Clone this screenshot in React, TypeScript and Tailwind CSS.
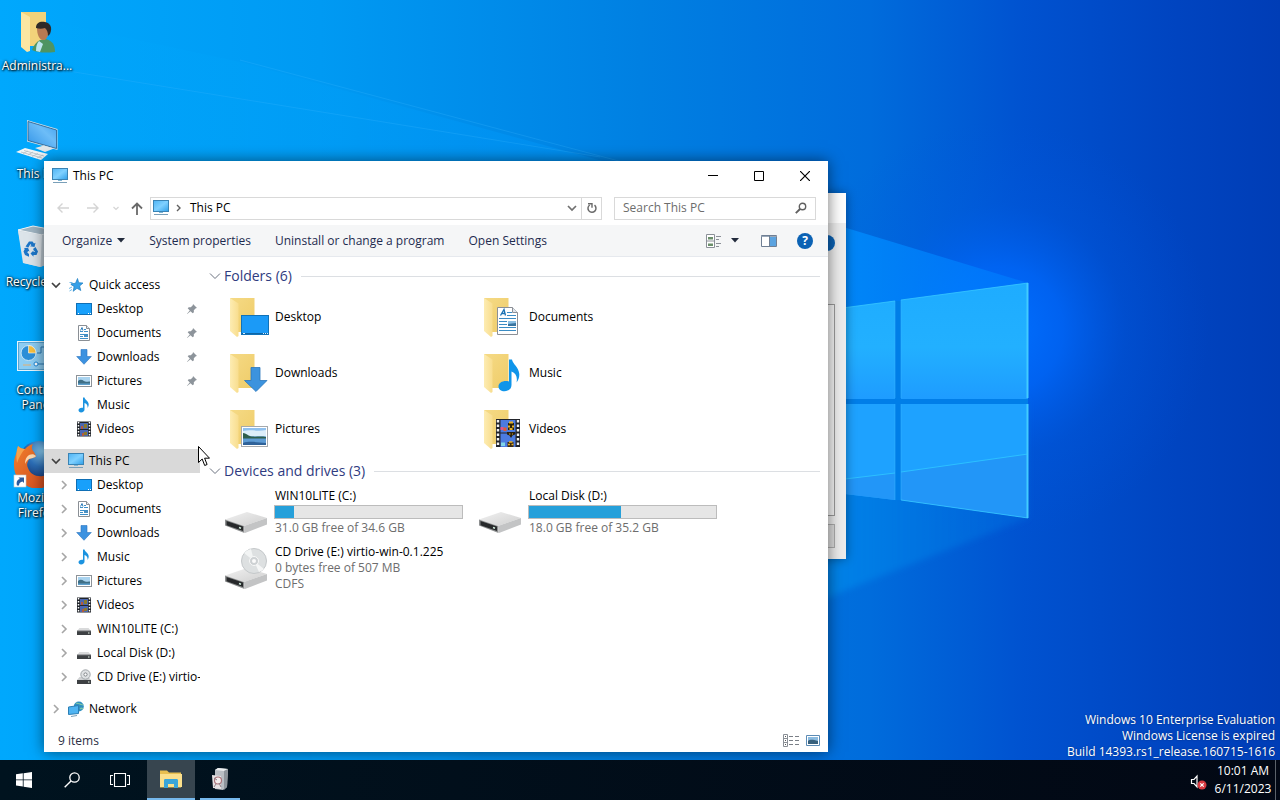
import { type ReactNode } from "react";

/* ---------- small icons ---------- */

function PcIcon() {
  return (
    <svg width="16" height="16" viewBox="0 0 16 16" aria-hidden="true">
      <defs>
        <linearGradient id="pcs" x1="0" y1="0" x2="1" y2="1">
          <stop offset="0" stopColor="#4fb3f3" />
          <stop offset=".5" stopColor="#7fd0ff" />
          <stop offset="1" stopColor="#2f9fe8" />
        </linearGradient>
      </defs>
      <rect x="0.5" y="0.5" width="15" height="11" fill="url(#pcs)" stroke="#3a83b4" />
      <path d="M6 12h4v1H6z" fill="#7fb6d6" />
      <path d="M1 14.5h14" stroke="#7a9fb8" />
    </svg>
  );
}

function DesktopIcon() {
  return (
    <svg width="16" height="16" viewBox="0 0 16 16" aria-hidden="true">
      <rect x="0.5" y="2.5" width="15" height="11" fill="#18a0fb" stroke="#0f6fb5" />
      <path d="M2 12.5h1M12 12.5h1M14 12.5h1" stroke="#fff" />
    </svg>
  );
}

function DocIcon() {
  return (
    <svg width="16" height="16" viewBox="0 0 16 16" aria-hidden="true">
      <path d="M2.5 .5h8l3 3v12h-11z" fill="#fff" stroke="#8a8f95" />
      <path d="M10.500 .5v3h3" fill="#e4e8ec" stroke="#8a8f95" />
      <path d="M4 6.500h3M8 6.500h4M4 9.500h8M4 13.500h8M8 4.500h2M4 11.500h3" stroke="#3d8fc8" />
      <path d="M4.500 5.500l1.500-3 1 3" fill="none" stroke="#2a7ab8" />
      <path d="M8 10h4v2H8z" fill="#4a90c2" />
    </svg>
  );
}

function DownIcon() {
  return (
    <svg width="16" height="16" viewBox="0 0 16 16" aria-hidden="true">
      <path d="M5 .5h6v7h4.300L8 15.300.7 7.500H5z" fill="#3c92e0" stroke="#2a74c0" strokeWidth=".6" />
    </svg>
  );
}

function PictureIcon() {
  return (
    <svg width="16" height="16" viewBox="0 0 16 16" aria-hidden="true">
      <rect x=".5" y="2.500" width="15" height="11" fill="#fff" stroke="#8c9298" />
      <path d="M2 4h12v8H2z" fill="#a9d3ef" />
      <path d="M2 8c2-2 4-1.500 6 0s4 0 6 .5V12H2z" fill="#3f6f86" />
      <path d="M2 10.500h12V12H2z" fill="#5ea0cd" />
    </svg>
  );
}

function MusicIcon() {
  return (
    <svg width="16" height="16" viewBox="0 0 16 16" aria-hidden="true">
      <path
        d="M7 .5h1.500c.3 2 2.200 2.800 3.400 4.500 1.300 1.800 1 4.200-.4 6 .3-2.200-.3-4.200-3-4.900v6.400c0 1.700-1.500 2.900-3.400 2.900-1.600 0-2.600-.9-2.600-2.100 0-1.700 2-3 4.500-2.500z"
        fill="#1b93e0"
      />
    </svg>
  );
}

function VideoIcon() {
  return (
    <svg width="16" height="16" viewBox="0 0 16 16" aria-hidden="true">
      <path d="M1 .5h14v15H1z" fill="#20242a" />
      <path d="M4 2h8v6H4zM4 9h8v6H4z" fill="#4a67b0" />
      <path d="M2.500 1v14.500M13.500 1v14.500" stroke="#fff" strokeWidth="1.500" strokeDasharray="1.500 1.500" />
      <path d="M5 5h2v3H5zM6 12h2v3H6z" fill="#b05a40" />
      <path d="M8 3h3v4H8zM8 11h3v3H8z" fill="#8a7a2c" />
    </svg>
  );
}

function DriveIcon() {
  return (
    <svg width="16" height="16" viewBox="0 0 16 16" aria-hidden="true">
      <path d="M3.500 7h9L15 10H1z" fill="#d9dadb" />
      <path d="M1 10h14v4H1z" fill="#3d4043" />
      <path d="M1 10h14" stroke="#6c6f72" />
      <path d="M12 12h1.500" stroke="#e8f4e8" />
    </svg>
  );
}

function CdSmallIcon() {
  return (
    <svg width="16" height="16" viewBox="0 0 16 16" aria-hidden="true">
      <path d="M3.500 8h9L15 11H1z" fill="#cfd1d3" />
      <circle cx="9.500" cy="5.500" r="4.700" fill="#dfe2e4" stroke="#8e9498" strokeWidth=".8" />
      <circle cx="9.500" cy="5.500" r="1.600" fill="#fff" stroke="#777c80" strokeWidth=".9" />
      <path d="M1 11h14v4H1z" fill="#3d4043" />
      <path d="M12 13h1.500" stroke="#e8f4e8" />
    </svg>
  );
}

function StarIcon() {
  return (
    <svg width="16" height="16" viewBox="0 0 16 16" aria-hidden="true">
      <path
        d="M9.500 1.500l1.200 4.200 4.300.3-3.400 3 1.200 4.500-3.800-2.200-3.800 3 .9-4.800-3.100-2 .2-.8 4.300-.4z"
        fill="#35a0e8"
        stroke="#1b7cc0"
        strokeWidth=".7"
      />
      <path d="M1.500 5.500h3M1 11.500l3-1.500M1.500 14l2.500-1.500" stroke="#5fb2e6" strokeWidth=".9" />
    </svg>
  );
}

function NetworkIcon() {
  return (
    <svg width="16" height="16" viewBox="0 0 16 16" aria-hidden="true">
      <circle cx="10.800" cy="5.500" r="5" fill="#2f8fc0" />
      <path d="M8 2c2 1 3 0 4 1s2 0 3 1M12 8c1-1 2-1 3 0" stroke="#7cc4a8" strokeWidth="1.200" fill="none" />
      <path d="M.5 6l10-1.500v8l-10 1z" fill="#4fb4f2" stroke="#2c7fb5" />
      <path d="M3 15.500l6-1" stroke="#7a9fb8" />
    </svg>
  );
}

function PinIcon() {
  return (
    <svg width="12" height="12" viewBox="0 0 12 12" aria-hidden="true">
      <path d="M7 1l4 4-1.200.2-2 2 .1 2L6.700 10.300 4.500 8.200 1.200 11l-.2-.2L3.800 7.500 1.700 5.300l1.100-1.100 2 .1 2-2z" fill="#8d949b" />
    </svg>
  );
}

function Chevron({ open, thin }: { open: boolean; thin?: boolean }) {
  if (thin) {
    return (
      <svg width="12" height="8" viewBox="0 0 12 8" aria-hidden="true">
        <path d="M1 1.500l5 5 5-5" fill="none" stroke="#6b7280" />
      </svg>
    );
  }
  return open ? (
    <svg width="10" height="10" viewBox="0 0 10 10" aria-hidden="true">
      <path d="M1 3l4 4 4-4" fill="none" stroke="#404040" strokeWidth="1.700" />
    </svg>
  ) : (
    <svg width="10" height="10" viewBox="0 0 10 10" aria-hidden="true">
      <path d="M3 1l4 4-4 4" fill="none" stroke="#a6a6a6" strokeWidth="1.600" />
    </svg>
  );
}

/* ---------- large icons ---------- */

function FolderIcon({ id, children }: { id: string; children: ReactNode }) {
  return (
    <svg width="48" height="48" viewBox="0 0 48 48" aria-hidden="true">
      <defs>
        <linearGradient id={"back" + id} x1="0" y1="0" x2="1" y2="1">
          <stop offset="0" stopColor="#f5da86" />
          <stop offset="1" stopColor="#efcc68" />
        </linearGradient>
        <linearGradient id={"front" + id} x1="0" y1="0" x2="1" y2="0">
          <stop offset="0" stopColor="#fdecb2" />
          <stop offset="1" stopColor="#f8dd8e" />
        </linearGradient>
      </defs>
      <path d="M8 5h24.500v34H14z" fill={"url(#back" + id + ")"} />
      <path d="M8 5l8.500 5.500V43l-1.500 1-7-6z" fill={"url(#front" + id + ")"} />
      {children}
    </svg>
  );
}

const folderArt: Record<string, ReactNode> = {
  Desktop: (
    <>
      <rect x="19.500" y="22.500" width="27" height="19" fill="#1b9af7" stroke="#1172b8" />
      <path d="M20 40.500h26" stroke="#0e65a5" />
      <path d="M21 40.500h2M41 40.500h1M43 40.500h1M45 40.500h1" stroke="#d9efff" />
    </>
  ),
  Documents: (
    <>
      <path d="M21.500 14.500h15l5 5v22h-20z" fill="#fff" stroke="#8b8f96" />
      <path d="M36.500 14.500v5h5" fill="#dfe5ec" stroke="#8b8f96" />
      <path d="M24.500 22.500l3.500-6 1.500 6M25.500 20.500h4" fill="none" stroke="#1c73b4" strokeWidth="1.300" />
      <path d="M31 19.500h5M31 22.500h9M23 25.500h17M23 28.500h8M23 31.500h8M23 34.500h17M23 37.500h17" stroke="#3b8cc4" />
      <path d="M32 28h8v5h-8z" fill="#39749f" />
      <path d="M32 28h8v2l-8 1z" fill="#8cbfe2" />
    </>
  ),
  Downloads: (
    <path d="M29 18.500h9v13h7L34 42.500 22.500 31.500H29z" fill="#3c93de" stroke="#2a76bb" strokeWidth=".8" />
  ),
  Music: (
    <path
      d="M33 10.500h3c.4 4 7 8 7.300 14.500.1 3.500-.8 6-2.800 8.500 1.200-5-.5-9.500-5-11v13.500c0 4-3.200 6.200-7 6.200-3.500 0-6-1.800-6-4.800 0-4.200 5.500-6.600 10.500-5z"
      fill="#0f95ea"
    />
  ),
  Pictures: (
    <>
      <rect x="19.500" y="21.500" width="26" height="20" fill="#fff" stroke="#a5a9ad" />
      <path d="M21 23h23v17H21z" fill="#8fc0ee" />
      <path d="M21 26c8-2 14 1 23-1v6H21z" fill="#dceefa" />
      <path d="M21 28c3 0 5 3 9 3.500s9-.5 14 .5v2H21z" fill="#2f5f4d" />
      <path d="M21 33.500h23V40H21z" fill="#5d9bd4" />
      <path d="M21 38c6-2 12-1 23 0v2H21z" fill="#2f6299" />
    </>
  ),
  Videos: (
    <>
      <path d="M20 14h24v28H20z" fill="#22242b" />
      <path d="M24.500 15h15v12.500h-15zM24.500 28.500h15V42h-15z" fill="#4c7be0" />
      <path d="M22 15v27M42 15v27" stroke="#f3f3f3" strokeWidth="2.400" strokeDasharray="2.500 2" />
      <path d="M32 18h6v7h-6z" fill="#2b2208" />
      <path d="M33 17.500h4M32 21.500h2M36 21.500h2M33.500 24h3" stroke="#e8b12a" strokeWidth="2" fill="none" />
      <path d="M24.500 22h3v3h-3z" fill="#e0568a" />
      <path d="M27.500 22.500h3v3.500h-3z" fill="#e85c31" />
      <path d="M31 27h8v2.500l-2.500 1L35 33l-1.500-2.500-2.500-1z" fill="#2a2010" />
      <path d="M33 29h1.500M36 29h1" stroke="#e8b12a" />
      <path d="M25 37.500h4V41h-4z" fill="#7fd4e8" />
      <path d="M31.500 37h6v5h-6z" fill="#3b2a10" />
      <path d="M32 39.500h2M35.500 39.500h2M33 37h3.500" stroke="#e8b12a" strokeWidth="1.500" />
    </>
  ),
};

function DriveBody() {
  return (
    <>
      <defs>
        <linearGradient id="dtop" x1="0" y1="0" x2="1" y2="1">
          <stop offset="0" stopColor="#f1f1f1" />
          <stop offset="1" stopColor="#cfcfcf" />
        </linearGradient>
      </defs>
      <path d="M3 31.500L25 24l20 6L22 38z" fill="url(#dtop)" />
      <path d="M22 38l23-8v6.500L23 45z" fill="#c3c4c5" />
      <path d="M3 31.500l19 6.500.5 7L3 37.500z" fill="#8d8f90" />
      <path d="M4.500 33l16.500 5.600v4.300L4.500 37.200z" fill="#27292b" />
      <path d="M17 39.500l2 .7" stroke="#d5f0e0" strokeWidth="1.500" />
    </>
  );
}

function BigDrive({ disc }: { disc?: boolean }) {
  return (
    <svg width="48" height="48" viewBox="0 0 48 48" aria-hidden="true">
      <DriveBody />
      {disc && (
        <>
          <circle cx="32" cy="17" r="12.500" fill="#dde0e1" stroke="#c4c8ca" />
          <path d="M32 17L22 9a12.500 12.500 0 0 1 7-4z" fill="#f2f4f4" />
          <path d="M32 17l10 8a12.500 12.500 0 0 1-5 3z" fill="#f5f6f6" />
          <circle cx="32" cy="17" r="4.500" fill="#cdd1d3" stroke="#f8f8f8" />
          <circle cx="32" cy="17" r="2" fill="#fbfbfb" />
        </>
      )}
    </svg>
  );
}

/* ---------- desktop icons ---------- */

const desktopArt: ReactNode[] = [
  <svg key="a" width="48" height="48" viewBox="0 0 48 48" aria-hidden="true">
    <path d="M8 4h25v34H14z" fill="#f2d27a" />
    <path d="M8 4l9 5v34l-3 1-6-5z" fill="#fbe6a2" />
    <path d="M19 42c2-5 4-8 8-10l6-1c6 2 9 5 9 13-8 1-17 1-23-2z" fill="#4e9462" />
    <path d="M26 33l4 3-3 8-4-1c0-5 1-8 3-10z" fill="#bfe6ee" />
    <path d="M24 20c0-4 10-5 11 1 1 6-1 11-5 11s-6-6-6-12z" fill="#b87a52" />
    <path d="M23 20c0-6 5-7 9-6 5 1 8 5 5 12l-2 2c0-4-1-6-3-8-3 1-6 1-9 0z" fill="#2f2a28" />
  </svg>,
  <svg key="b" width="48" height="48" viewBox="0 0 48 48" aria-hidden="true">
    <defs>
      <linearGradient id="bigscreen" x1="0" y1="1" x2="1" y2="0">
        <stop offset="0" stopColor="#2f92e6" />
        <stop offset=".6" stopColor="#6dbdf8" />
        <stop offset="1" stopColor="#3f9fec" />
      </linearGradient>
    </defs>
    <path d="M14 4l30.500 9v21L14 25.500z" fill="#cfe2ee" />
    <path d="M15 5.500l28.500 8.500v18.500L15 24.500z" fill="url(#bigscreen)" stroke="#245a86" strokeWidth=".8" />
    <path d="M29 29.500l5 1.500v2l-6-1z" fill="#9aa6ae" />
    <path d="M22 32l9-2.500 10 3-9 3.500z" fill="#e3e8eb" />
    <path d="M3 36l9-4 23 6-7 6z" fill="#f2f5f7" />
    <path d="M8 36l21 6M11 34.500l20 5.500M15 35l-5 2.500M20 36l-5 3M25 37.500l-6 3M30 39l-6 3" stroke="#b2bcc4" strokeWidth=".8" />
  </svg>,
  <svg key="c" width="48" height="48" viewBox="0 0 48 48" aria-hidden="true">
    <path d="M5 6l15-4 21 4-4 33-10 4-16-4z" fill="#cfd9e0" />
    <path d="M5 6l15-4 21 4-12 5z" fill="#9fb4c2" stroke="#eef3f6" />
    <path d="M5 7l24 4-1.500 32L10 39z" fill="#dce4ea" />
    <path d="M29 11l12-5-4 33-9.500 4z" fill="#b9c5ce" />
    <g fill="#1d76c8">
      <path d="M12.500 22.500l3.500-5h3.500l1.500 2 1.500-.8-1 4.300-4.500-.8 1.400-1-1-1.200-2 3.500z" />
      <path d="M22.500 23l2.500 4.500-1.500 3.500h-3v1.800l-3-3.300 3-3v1.500h1.500l-2-3z" />
      <path d="M11 24l4-.2 1.500 3.700-1.400-.6-.8 1.500 1.700 1.600v2.800l-4-1.800-1.500-3.500 1.300-2.500z" />
    </g>
  </svg>,
  <svg key="d" width="48" height="48" viewBox="0 0 48 48" aria-hidden="true">
    <rect x="4.500" y="9.500" width="39" height="29" fill="#a9dcf8" stroke="#e6f5fd" />
    <rect x="5.500" y="10.500" width="37" height="27" fill="#8ccdf3" stroke="#5aa5d4" />
    <circle cx="15.500" cy="21" r="7.500" fill="#2d8fd8" stroke="#c9e6f8" />
    <path d="M15.500 21v-7.500a7.500 7.500 0 0 1 7.500 7.500z" fill="#f7bf3e" stroke="#fff" strokeWidth=".6" />
    <path d="M24 21h4v-6h14M25 32h17" stroke="#2a79b4" fill="none" />
    <circle cx="23" cy="32" r="2" fill="#fff" stroke="#1b86d6" />
    <path d="M10 33h8" stroke="#e6b070" />
  </svg>,
  <svg key="e" width="48" height="48" viewBox="0 0 48 48" aria-hidden="true">
    <defs>
      <radialGradient id="globe" cx=".6" cy=".25" r=".8">
        <stop offset="0" stopColor="#8cd0f5" />
        <stop offset=".5" stopColor="#2c6fb8" />
        <stop offset="1" stopColor="#132c66" />
      </radialGradient>
      <linearGradient id="fox" x1="0" y1="0" x2="1" y2="1">
        <stop offset="0" stopColor="#f0802c" />
        <stop offset="1" stopColor="#d0451e" />
      </linearGradient>
    </defs>
    <circle cx="26" cy="21" r="20" fill="url(#globe)" />
    <path
      d="M5 6c2 2 4 3 7 3 2-2 4-4 8-5-2 3-1 6 1 8l2 4c-1 2-5 2-7 3-1 3-3 5-1 9 2 6 8 9 15 8 7-1 11-6 12-13 5 12-4 25-18 26C9 47 0 37 1 23c0-6 3-9 4-17z"
      fill="url(#fox)"
    />
    <path d="M5 6c2 2 4 3 7 3-3 3-6 8-8 14-1-6-1-12 1-17z" fill="#f6a24c" />
    <path d="M16 15c3-1 5-1 7 1-1 2-5 2-7 3-2 1-3 3-4 5 0-4 1-7 4-9z" fill="#fbd9b0" />
    <rect x="1" y="35" width="12" height="12" fill="#fff" stroke="#c8c8c8" strokeWidth=".6" />
    <path d="M4 45.500c-1-3 0-6 3-6.500L5.500 37.500H11V43l-1.500-1.500c-2 .3-3.500 1.500-3.500 4z" fill="#2b5a9e" />
  </svg>,
];

const desktopLabels = ["Administra...", "This PC", "Recycle Bin", "Control Panel", "Mozilla Firefox"];

function DesktopIcons() {
  return (
    <ul className="relative flex w-[74px] flex-col">
      {desktopLabels.map((label, i) => (
        <li key={label} className="h-[108px]">
          <button className="flex w-full flex-col items-center pt-2 text-[12px] leading-[15px] text-white [text-shadow:1px_1px_2px_#000,0_0_3px_#000]">
            {desktopArt[i]}
            <span className={i > 2 ? "mt-[2px] w-12 text-center" : "mt-[2px] whitespace-nowrap"}>{label}</span>
          </button>
        </li>
      ))}
    </ul>
  );
}

/* ---------- wallpaper ---------- */

function Wallpaper() {
  return (
    <svg className="absolute inset-0 h-full w-full" viewBox="0 0 1280 760" preserveAspectRatio="xMaxYMid slice" aria-hidden="true">
      <defs>
        <linearGradient id="sky" x1="0" y1="0" x2="1" y2="0">
          <stop offset="0" stopColor="#00a8fd" />
          <stop offset=".25" stopColor="#009af3" />
          <stop offset=".5" stopColor="#0080e2" />
          <stop offset=".68" stopColor="#006cdc" />
          <stop offset=".8" stopColor="#0052d0" />
          <stop offset=".92" stopColor="#0044c0" />
          <stop offset="1" stopColor="#003db6" />
        </linearGradient>
        <radialGradient id="glow" gradientUnits="userSpaceOnUse" cx="1000" cy="330" r="210">
          <stop offset="0" stopColor="#0070ff" />
          <stop offset=".3" stopColor="#0068fc" stopOpacity=".75" />
          <stop offset=".6" stopColor="#005ce8" stopOpacity=".25" />
          <stop offset="1" stopColor="#0054e0" stopOpacity="0" />
        </radialGradient>
        <linearGradient id="beam" x1="0" y1="0" x2="1" y2="0">
          <stop offset="0" stopColor="#00b4ff" stopOpacity="0" />
          <stop offset=".5" stopColor="#009cff" stopOpacity=".35" />
          <stop offset=".8" stopColor="#0090ff" stopOpacity=".8" />
          <stop offset="1" stopColor="#007cff" stopOpacity=".6" />
        </linearGradient>
        <linearGradient id="lowbeam" x1="0" y1="0" x2="1" y2="0">
          <stop offset="0" stopColor="#00a8ff" stopOpacity=".1" />
          <stop offset=".8" stopColor="#008aec" stopOpacity=".75" />
          <stop offset="1" stopColor="#0070e0" stopOpacity=".4" />
        </linearGradient>
        <linearGradient id="pane" x1="0" y1="0" x2="0" y2="1">
          <stop offset="0" stopColor="#1eacff" />
          <stop offset=".55" stopColor="#22b0ff" />
          <stop offset="1" stopColor="#1e9cff" />
        </linearGradient>
        <filter id="soft" x="-5%" y="-5%" width="110%" height="110%">
          <feGaussianBlur stdDeviation="3" />
        </filter>
      </defs>
      <path d="M0 0h1280v760H0z" fill="url(#sky)" />
      <path d="M780 100h500v460H780z" fill="url(#glow)" />
      <path d="M1028 283L830 223 240 62 0 10v390h1028z" fill="url(#beam)" />
      <path d="M1028 518L846 590 400 780H0V400h1028z" fill="url(#lowbeam)" filter="url(#soft)" />
      <path d="M0 60l600 97M240 60l420 112" stroke="#3cb8ff" strokeOpacity=".25" fill="none" />
      <path d="M820 311l75-10v98h-75zM901 300l127-17v116H901z" fill="url(#pane)" />
      <path d="M820 404h75v96l-75-9zM901 404h127v114l-127-18z" fill="#1ea2ff" />
      <path d="M820 482l75-9v27l-75-9zM901 472l127-18v64l-127-18z" fill="#2296f8" />
      <path d="M895 301h6v199h-6zM820 399h208v5H820z" fill="#007ee8" />
      <path d="M820 482l75-9M901 472l127-18" stroke="#2cc0ff" />
      <path d="M901 300l127-17M1028 518l-127-18M820 311l75-10" stroke="#38c8ff" strokeOpacity=".8" fill="none" />
      <path d="M895 301v97M901 300v98M895 404v96M901 404v96" stroke="#38b8ff" strokeOpacity=".5" fill="none" />
      <path d="M1027.500 283v115M1027.500 404v114" stroke="#42ccff" strokeWidth="2" />
    </svg>
  );
}

/* ---------- explorer ---------- */

type Row = { name: string; icon: ReactNode; pinned?: boolean };

const quick: Row[] = [
  { name: "Desktop", icon: <DesktopIcon />, pinned: true },
  { name: "Documents", icon: <DocIcon />, pinned: true },
  { name: "Downloads", icon: <DownIcon />, pinned: true },
  { name: "Pictures", icon: <PictureIcon />, pinned: true },
  { name: "Music", icon: <MusicIcon /> },
  { name: "Videos", icon: <VideoIcon /> },
];

const pcRows: Row[] = [
  { name: "Desktop", icon: <DesktopIcon /> },
  { name: "Documents", icon: <DocIcon /> },
  { name: "Downloads", icon: <DownIcon /> },
  { name: "Music", icon: <MusicIcon /> },
  { name: "Pictures", icon: <PictureIcon /> },
  { name: "Videos", icon: <VideoIcon /> },
  { name: "WIN10LITE (C:)", icon: <DriveIcon /> },
  { name: "Local Disk (D:)", icon: <DriveIcon /> },
  { name: "CD Drive (E:) virtio-win-0.1.225", icon: <CdSmallIcon /> },
];

function RootRow({ name, icon, open, selected }: { name: string; icon: ReactNode; open: boolean; selected?: boolean }) {
  return (
    <button className={selected ? "flex h-6 w-full items-center bg-[#d9d9d9] pl-[7px]" : "flex h-6 w-full items-center pl-[7px]"}>
      <Chevron open={open} />
      <span className="ml-[7px] flex items-center gap-[5px]">
        {icon}
        <span>{name}</span>
      </span>
    </button>
  );
}

function ChildRow({ row, chevron }: { row: Row; chevron?: boolean }) {
  return (
    <li>
      <button className="flex h-6 w-full items-center overflow-hidden pl-[15px]">
        <span className="w-[17px] shrink-0">{chevron && <Chevron open={false} />}</span>
        <span className="shrink-0">{row.icon}</span>
        <span className="ml-[5px] whitespace-nowrap">{row.name}</span>
        {row.pinned && (
          <span className="mr-[2px] ml-auto">
            <PinIcon />
          </span>
        )}
      </button>
    </li>
  );
}

function Sidebar() {
  return (
    <nav className="w-[156px] shrink-0 overflow-hidden pt-4" aria-label="Navigation pane">
      <RootRow name="Quick access" icon={<StarIcon />} open />
      <ul>
        {quick.map((r) => (
          <ChildRow key={r.name} row={r} />
        ))}
      </ul>
      <div className="mt-2">
        <RootRow name="This PC" icon={<PcIcon />} open selected />
        <ul>
          {pcRows.map((r) => (
            <ChildRow key={r.name} row={r} chevron />
          ))}
        </ul>
      </div>
      <div className="mt-2">
        <RootRow name="Network" icon={<NetworkIcon />} open={false} />
      </div>
    </nav>
  );
}

function GroupHeader({ children }: { children: ReactNode }) {
  return (
    <h2 className="flex h-[26px] items-center text-[14px] text-[#2f3b80]">
      <Chevron open thin />
      <span className="ml-[3px]">{children}</span>
      <span className="ml-[9px] h-px flex-1 bg-[#dcdfe3]" />
    </h2>
  );
}

function DriveTile({ name, used, lines, disc }: { name: string; used?: number; lines: string[]; disc?: boolean }) {
  return (
    <button className="flex h-14 w-[254px] items-center text-left">
      <BigDrive disc={disc} />
      <span className="flex flex-1 flex-col pl-1 leading-4">
        <span className="pl-px">{name}</span>
        {used !== undefined && (
          <span className="mt-px mb-px block h-[14px] w-[189px] border border-[#bcbcbc] bg-[#e6e6e6]">
            <span className="block h-full bg-[#26a0da]" style={{ width: used + "%" }} />
          </span>
        )}
        {lines.map((l) => (
          <span key={l} className="pl-px whitespace-nowrap text-[#6d6d6d]">
            {l}
          </span>
        ))}
      </span>
    </button>
  );
}

function Content() {
  return (
    <main className="min-w-0 flex-1 pt-[6px] pr-2 pl-[9px]">
      <section>
        <GroupHeader>Folders (6)</GroupHeader>
        <div className="flex flex-wrap pl-[13px]">
          {["Desktop", "Documents", "Downloads", "Music", "Pictures", "Videos"].map((n) => (
            <button key={n} className="flex h-14 w-[254px] items-center gap-[5px]">
              <FolderIcon id={n}>{folderArt[n]}</FolderIcon>
              <span>{n}</span>
            </button>
          ))}
        </div>
      </section>
      <section className="mt-px">
        <GroupHeader>Devices and drives (3)</GroupHeader>
        <div className="flex flex-wrap pl-[13px]">
          <DriveTile name="WIN10LITE (C:)" used={10} lines={["31.0 GB free of 34.6 GB"]} />
          <DriveTile name="Local Disk (D:)" used={49} lines={["18.0 GB free of 35.2 GB"]} />
          <DriveTile name="CD Drive (E:) virtio-win-0.1.225" lines={["0 bytes free of 507 MB", "CDFS"]} disc />
        </div>
      </section>
    </main>
  );
}

function TitleBar() {
  return (
    <header className="flex h-[30px] items-center">
      <div className="flex flex-1 items-center gap-[5px] pl-2">
        <PcIcon />
        <h1>This PC</h1>
      </div>
      <button aria-label="Minimize" className="flex h-full w-[46px] items-center justify-center">
        <svg width="10" height="10"><path d="M0 4.500h10" stroke="#000" /></svg>
      </button>
      <button aria-label="Maximize" className="flex h-full w-[46px] items-center justify-center">
        <svg width="10" height="10"><path d="M.5 .5h9v9h-9z" fill="none" stroke="#000" /></svg>
      </button>
      <button aria-label="Close" className="flex h-full w-[46px] items-center justify-center">
        <svg width="10" height="10"><path d="M0 0l10 10M10 0L0 10" stroke="#000" strokeWidth="1.200" /></svg>
      </button>
    </header>
  );
}

function AddressRow() {
  return (
    <div className="flex h-[34px] items-center px-3">
      <button aria-label="Back" disabled className="flex w-[14px] justify-center">
        <svg width="12" height="12" viewBox="0 0 12 12"><path d="M12 6H1M5.500 1.500L1 6l4.500 4.500" fill="none" stroke="#d4d4d4" strokeWidth="1.400" /></svg>
      </button>
      <button aria-label="Forward" disabled className="ml-4 flex w-[14px] justify-center">
        <svg width="12" height="12" viewBox="0 0 12 12"><path d="M0 6h11M6.500 1.500L11 6l-4.500 4.500" fill="none" stroke="#d4d4d4" strokeWidth="1.400" /></svg>
      </button>
      <button aria-label="Recent locations" disabled className="ml-3 flex w-2 justify-center">
        <svg width="6" height="5" viewBox="0 0 6 5"><path d="M.5 1L3 3.500 5.500 1" fill="none" stroke="#d4d4d4" strokeWidth="1.200" /></svg>
      </button>
      <button aria-label="Up" className="ml-[10px] flex w-[14px] justify-center">
        <svg width="12" height="13" viewBox="0 0 12 13"><path d="M6 13V1.500M1 6.500l5-5 5 5" fill="none" stroke="#6a6a6a" strokeWidth="1.800" /></svg>
      </button>
      <div className="ml-[6px] flex h-[23px] flex-1 items-center border border-[#d9d9d9] pl-[2px]">
        <PcIcon />
        <button aria-label="Expand" className="ml-[6px]">
          <svg width="7" height="8" viewBox="0 0 7 8"><path d="M2 1l3 3-3 3" fill="none" stroke="#606060" strokeWidth="1.400" /></svg>
        </button>
        <button className="ml-2 flex-1 pb-px text-left">This PC</button>
        <button aria-label="Previous locations" className="mr-1">
          <svg width="10" height="8" viewBox="0 0 10 8"><path d="M1 2l4 4 4-4" fill="none" stroke="#707070" strokeWidth="1.700" /></svg>
        </button>
        <button aria-label="Refresh" className="flex h-full w-[20px] items-center justify-center border-l border-[#d9d9d9]">
          <svg width="12" height="12" viewBox="0 0 12 12">
            <path d="M8.500 3.200a4 4 0 1 1-4.800-.2" fill="none" stroke="#6a6a6a" strokeWidth="1.500" />
            <path d="M2 1.700h4v4" fill="none" stroke="#6a6a6a" strokeWidth="1.400" />
          </svg>
        </button>
      </div>
      <label className="ml-3 flex h-[23px] w-[202px] items-center border border-[#d9d9d9] px-2">
        <input aria-label="Search This PC" placeholder="Search This PC" className="min-w-0 flex-1 outline-none placeholder:text-[#6d6d6d]" />
        <svg width="12" height="12" viewBox="0 0 12 12" aria-hidden="true">
          <circle cx="7.500" cy="4.500" r="3.200" fill="none" stroke="#606060" strokeWidth="1.400" />
          <path d="M5 7L.8 11.200" stroke="#606060" strokeWidth="1.900" />
        </svg>
      </label>
    </div>
  );
}

function Toolbar() {
  return (
    <div className="flex h-8 items-center border-b border-[#e6e9ee] bg-[#f5f6f7] pr-[15px] pl-[18px] text-[#1e2b4f]">
      <div className="flex items-center gap-6">
        <button className="flex items-center gap-[5px]">
          Organize
          <svg width="8" height="5"><path d="M0 0h8L4 4.500z" fill="#222b3c" /></svg>
        </button>
        <button>System properties</button>
        <button>Uninstall or change a program</button>
        <button>Open Settings</button>
      </div>
      <button aria-label="Change your view" className="ml-auto">
        <svg width="16" height="16" viewBox="0 0 16 16">
          <path d="M.5 1.500h8v13h-8zM.5 8h8" fill="#fff" stroke="#8b9098" />
          <path d="M2 4h5v2.500H2zM2 10.500h5V13H2z" fill="#6b8f6b" />
          <path d="M10 3.500h5M10 6.500h3M10 10.500h5M10 13.500h3" stroke="#8b9098" />
        </svg>
      </button>
      <button aria-label="More view options" className="ml-[9px]">
        <svg width="8" height="5"><path d="M0 0h8L4 4.500z" fill="#222b3c" /></svg>
      </button>
      <button aria-label="Preview pane" className="ml-[22px]">
        <svg width="16" height="12" viewBox="0 0 16 12">
          <path d="M.5 .5h15v11H.5z" fill="#fff" stroke="#6f7f94" />
          <path d="M.5 1.500h15" stroke="#9aa8b8" />
          <path d="M9 2h6v9H9z" fill="#5ba3e0" />
          <path d="M8.500 1v10" stroke="#6f7f94" />
        </svg>
      </button>
      <button aria-label="Help" className="ml-5 flex h-4 w-4 items-center justify-center rounded-full bg-[#0b62b4] text-[12px] leading-4 font-bold text-white">
        ?
      </button>
    </div>
  );
}

function StatusBar() {
  return (
    <footer className="flex h-[22px] items-center pr-2 pb-px pl-[14px] text-[#2b2f45]">
      <span>9 items</span>
      <button aria-label="Details view" className="ml-auto">
        <svg width="17" height="13" viewBox="0 0 17 13">
          <path d="M.5 .5h4v12h-4zM.5 4.500h4M.5 8.500h4" fill="none" stroke="#8a8f96" />
          <path d="M2 2.500h1M2 6.500h1M2 10.500h1" stroke="#555" />
          <path d="M6 2.500h4M12 2.500h4M6 6.500h4M12 6.500h4M6 10.500h4M12 10.500h4" stroke="#7a7f86" />
        </svg>
      </button>
      <button aria-label="Large icons view" className="ml-[6px]">
        <svg width="14" height="11" viewBox="0 0 14 11">
          <path d="M.5 .5h13v10H.5z" fill="#fff" stroke="#5c8bb5" />
          <path d="M2 2h10v7H2z" fill="#8bbbe0" />
          <path d="M2 6c3-2 5-1 10 0v3H2z" fill="#38607c" />
        </svg>
      </button>
    </footer>
  );
}

function BackWindow() {
  return (
    <div className="absolute top-[193px] left-[480px] flex h-[366px] w-[366px] flex-col bg-[#ececec] shadow-[0_0_10px_#0006]">
      <div className="h-[30px] bg-[#fdfdfd]" />
      <div className="flex flex-1 flex-col items-end px-[11px] pb-[11px]">
        <div className="mt-3 h-4 w-4 rounded-full bg-[#0b62b4]" />
        <div className="mt-[53px] w-full flex-1 border border-[#9a9a9a] bg-[#f4f4f4]" />
        <div className="mt-2 h-6 w-20 border border-[#adadad] bg-[#dcdcdc]" />
      </div>
    </div>
  );
}

function Explorer() {
  return (
    <div className="absolute top-[161px] left-[44px] flex h-[591px] w-[784px] flex-col bg-white text-[12px] leading-4 text-black shadow-[0_0_14px_#0008]">
      <TitleBar />
      <AddressRow />
      <Toolbar />
      <div className="flex min-h-0 flex-1">
        <Sidebar />
        <Content />
      </div>
      <StatusBar />
    </div>
  );
}

function Taskbar() {
  return (
    <footer className="relative flex h-10 shrink-0 bg-linear-to-r from-[#00131f] to-[#020814] text-[12px] text-white">
      <button aria-label="Start" className="flex w-12 items-center justify-center">
        <svg width="16" height="16" viewBox="0 0 16 16"><path d="M0 2.300L6.800 1.300v6.200H0zM7.600 1.200L16 0v7.500H7.600zM0 8.300h6.800v6.300L0 13.600zM7.600 8.300H16V16l-8.400-1.200z" fill="#fff" /></svg>
      </button>
      <button aria-label="Search" className="flex w-12 items-center justify-center">
        <svg width="16" height="16" viewBox="0 0 16 16"><circle cx="10.500" cy="5.500" r="4.700" fill="none" stroke="#fff" strokeWidth="1.300" /><path d="M7 9L.7 15.300" stroke="#fff" strokeWidth="1.400" /></svg>
      </button>
      <button aria-label="Task View" className="flex w-12 items-center justify-center">
        <svg width="20" height="14" viewBox="0 0 20 14"><path d="M4.500 .5h11v13h-11zM3 2.500H.5v9H3M17 2.500h2.500v9H17" fill="none" stroke="#fff" strokeWidth="1.100" /></svg>
      </button>
      <button aria-label="File Explorer" className="ml-[3px] flex w-12 items-center justify-center border-b-2 border-[#76b9ed] bg-[#37454f]">
        <svg width="24" height="24" viewBox="0 0 24 24">
          <path d="M1 3.500h7l2 2h12v15H1z" fill="#e8bf50" />
          <path d="M1 7h22v13H1z" fill="#fbe08c" />
          <path d="M5 21v-7.500c0-1 .5-1.500 1.500-1.500h11c1 0 1.500.5 1.500 1.500V21h-4v-4H9v4z" fill="#3aa5d8" />
        </svg>
      </button>
      <button aria-label="Server Manager" className="ml-[5px] flex w-10 items-center justify-center border-b-2 border-[#76b9ed]">
        <svg width="24" height="24" viewBox="0 0 24 24">
          <path d="M7 3l3-2 10 1-1 18-4 3-8-1z" fill="#b9bec4" />
          <path d="M7 3l9 1 4-2-10-1z" fill="#eceef0" />
          <path d="M16 4l4-2-1 18-3 3z" fill="#8d949b" />
          <path d="M4 8l9 1v13l-8-1z" fill="#e6e2e4" />
          <circle cx="10" cy="13.500" r="3.500" fill="#f3eeee" stroke="#a9737a" strokeWidth="1.200" />
          <path d="M8 17l-2 3M11 16l2 4M6 11l3 2" stroke="#8d7f86" />
        </svg>
      </button>
      <div className="ml-auto flex items-center">
        <button aria-label="Volume muted" className="mt-1 mr-[6px]">
          <svg width="17" height="16" viewBox="0 0 17 16">
            <path d="M1.500 5.500h2.500l3-3.500v11l-3-3.500H1.500z" fill="none" stroke="#fff" strokeWidth="1.200" />
            <circle cx="12" cy="11" r="4.500" fill="#d83b41" />
            <path d="M10.300 9.300l3.400 3.400M13.700 9.300l-3.400 3.400" stroke="#fff" strokeWidth="1.200" />
          </svg>
        </button>
        <button className="mr-[2px] flex w-[60px] flex-col items-center leading-[18px] whitespace-nowrap">
          <span>10:01 AM</span>
          <span>6/11/2023</span>
        </button>
        <button aria-label="Show desktop" className="h-10 w-[5px] border-l border-[#5b626a]" />
      </div>
    </footer>
  );
}

export default function App() {
  return (
    <div className="flex h-screen flex-col overflow-hidden font-['Open_Sans','Noto_Sans',sans-serif]">
      <div className="relative flex-1 overflow-hidden bg-[#0078d7]">
        <Wallpaper />
        <DesktopIcons />
        <BackWindow />
        <Explorer />
        <p className="absolute right-[5px] bottom-0 text-right text-[12px] leading-[16px] text-white [text-shadow:0_0_2px_#0006]">
          Windows 10 Enterprise Evaluation
          <br />
          Windows License is expired
          <br />
          Build 14393.rs1_release.160715-1616
        </p>
        <svg className="pointer-events-none absolute top-[445px] left-[198px]" width="12" height="22" viewBox="0 0 12 22" aria-hidden="true">
          <path d="M.5 1.500v16l3.700-3.500 2.500 6.500 2.400-1L6.600 13.200h4.900z" fill="#fff" stroke="#000" />
        </svg>
      </div>
      <Taskbar />
    </div>
  );
}
